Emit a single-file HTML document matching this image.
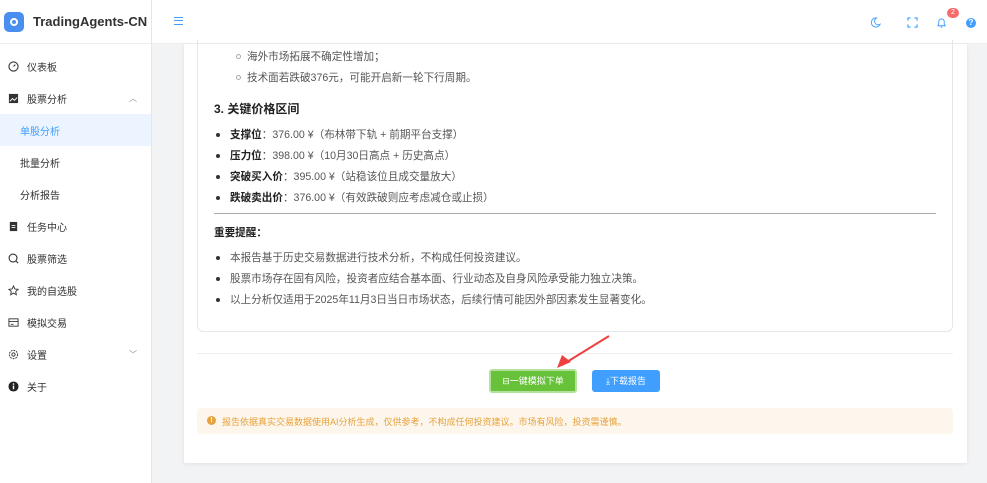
<!DOCTYPE html>
<html><head><meta charset="utf-8"><style>
*{box-sizing:border-box;margin:0;padding:0}
body{width:987px;height:483px;overflow:hidden;background:#f2f3f5;font-family:"Liberation Sans","Noto Sans CJK SC",sans-serif;color:#303133;position:relative}
.side{position:absolute;left:0;top:0;width:152px;height:483px;background:#fff;border-right:1px solid #e6e6e6}
.logo{height:44px;display:flex;align-items:center;padding-left:4px;border-bottom:1px solid #eee;white-space:nowrap}
.lg{width:20px;height:20px;border-radius:5px;background:#4a8ff0;display:flex;align-items:center;justify-content:center;flex:none}
.lg i{width:8px;height:8px;border-radius:50%;border:2px solid #fff;display:block}
.logo b{font-size:13px;margin-left:9px;color:#303133;font-weight:bold;white-space:nowrap}
.mi{height:32px;display:flex;align-items:center;font-size:10px;color:#303133;padding-left:8px;position:relative}
.mi .ic{width:11px;height:11px;margin-right:8px;display:inline-block}
.sub{padding-left:20px}
.act{background:#ecf5ff;color:#409eff}
.arr{position:absolute;right:14px;font-size:8px;color:#888}
.hdr{position:absolute;left:152px;top:0;right:0;height:44px;background:#fff;border-bottom:1px solid #eee}
.card{position:absolute;left:184px;top:44px;width:783px;height:419px;background:#fff;box-shadow:0 1px 4px rgba(0,0,0,.08)}
.inner{position:absolute;left:13px;top:-4px;width:756px;height:292px;border:1px solid #e4e7ed;border-top:none;border-radius:0 0 6px 6px}
.t{position:absolute;font-size:10.6px;color:#555;white-space:nowrap}
.t b{color:#222}
.dot{position:absolute;width:4px;height:4px;border-radius:50%;background:#333}
.cir{position:absolute;width:5px;height:5px;border-radius:50%;border:1px solid #aaa}
</style></head><body>
<div class="side">
<div class="logo"><div class="lg"><i></i></div><b>TradingAgents-CN</b></div>
<div style="height:6px"></div>
<div class="mi"><svg class="ic" viewBox="0 0 12 12"><circle cx="6" cy="6" r="5" fill="none" stroke="#333" stroke-width="1.2"/><path d="M6 6l2-2" stroke="#333" stroke-width="1.2"/></svg>仪表板</div>
<div class="mi"><svg class="ic" viewBox="0 0 12 12"><rect x="1" y="1" width="10" height="10" fill="#333"/><path d="M2 9l3-3 2 2 3-3" stroke="#fff" fill="none"/></svg>股票分析<span class="arr">︿</span></div>
<div class="mi sub act">单股分析</div>
<div class="mi sub">批量分析</div>
<div class="mi sub">分析报告</div>
<div class="mi"><svg class="ic" viewBox="0 0 12 12"><rect x="2" y="1" width="8" height="10" fill="#333"/><path d="M4 5h4M4 7h4" stroke="#fff"/></svg>任务中心</div>
<div class="mi"><svg class="ic" viewBox="0 0 12 12"><circle cx="5.5" cy="5.5" r="4.3" fill="none" stroke="#333" stroke-width="1.2"/><path d="M8.5 8.5l2.5 2.5" stroke="#333" stroke-width="1.2"/></svg>股票筛选</div>
<div class="mi"><svg class="ic" viewBox="0 0 12 12"><path d="M6 1l1.5 3.3 3.5.4-2.6 2.4.7 3.5L6 8.8 2.9 10.6l.7-3.5L1 4.7l3.5-.4z" fill="none" stroke="#333"/></svg>我的自选股</div>
<div class="mi"><svg class="ic" viewBox="0 0 12 12"><rect x="1" y="2" width="10" height="8" fill="none" stroke="#333"/><path d="M1 5h10M3 8h3" stroke="#333"/></svg>模拟交易</div>
<div class="mi"><svg class="ic" viewBox="0 0 12 12"><circle cx="6" cy="6" r="4.5" fill="none" stroke="#333" stroke-dasharray="2 1"/><circle cx="6" cy="6" r="1.8" fill="none" stroke="#333"/></svg>设置<span class="arr">﹀</span></div>
<div class="mi"><svg class="ic" viewBox="0 0 12 12"><circle cx="6" cy="6" r="5.5" fill="#222"/><path d="M6 5v4" stroke="#fff" stroke-width="1.5"/><circle cx="6" cy="3.3" r=".9" fill="#fff"/></svg>关于</div>
</div>
<div class="hdr">
<div style="position:absolute;left:22px;top:17px;width:9px;height:8px;border-top:1.5px solid #409eff;border-bottom:1.5px solid #409eff"><div style="margin-top:2px;border-top:1.5px solid #409eff"></div></div>
<svg style="position:absolute;left:718px;top:17px" width="11" height="11" viewBox="0 0 12 12"><path d="M7 1a5 5 0 1 0 4 7A4 4 0 0 1 7 1z" fill="none" stroke="#409eff"/></svg>
<svg style="position:absolute;left:755px;top:17px" width="11" height="11" viewBox="0 0 12 12"><path d="M1 4V1h3M8 1h3v3M11 8v3H8M4 11H1V8" fill="none" stroke="#409eff" stroke-width="1.2"/></svg>
<svg style="position:absolute;left:784px;top:17px" width="11" height="12" viewBox="0 0 12 12"><path d="M2 9h8L9 7V4.5a3 3 0 0 0-6 0V7zM5 10.5h2" fill="none" stroke="#409eff"/></svg>
<div style="position:absolute;left:795px;top:8px;width:12px;height:10px;border-radius:5px;background:#f56c6c;color:#fff;font-size:7px;text-align:center;line-height:10px">2</div>
<div style="position:absolute;left:814px;top:18px;width:10px;height:10px;border-radius:50%;background:#409eff;color:#fff;font-size:8px;text-align:center;line-height:10px;font-weight:bold">?</div>
</div>
<div class="card">
<div class="inner"></div>
<div class="cir" style="left:52px;top:10px"></div><div class="t" style="left:63px;top:5px">海外市场拓展不确定性增加；</div>
<div class="cir" style="left:52px;top:31px"></div><div class="t" style="left:63px;top:26px">技术面若跌破376元，可能开启新一轮下行周期。</div>
<div class="t" style="left:30px;top:56px;font-size:12px;font-weight:bold;color:#222">3. 关键价格区间</div>
<div class="dot" style="left:32px;top:89px"></div><div class="t" style="left:46px;top:83px"><b>支撑位</b>：376.00 ¥（布林带下轨 + 前期平台支撑）</div>
<div class="dot" style="left:32px;top:110px"></div><div class="t" style="left:46px;top:104px"><b>压力位</b>：398.00 ¥（10月30日高点 + 历史高点）</div>
<div class="dot" style="left:32px;top:131px"></div><div class="t" style="left:46px;top:125px"><b>突破买入价</b>：395.00 ¥（站稳该位且成交量放大）</div>
<div class="dot" style="left:32px;top:152px"></div><div class="t" style="left:46px;top:146px"><b>跌破卖出价</b>：376.00 ¥（有效跌破则应考虑减仓或止损）</div>
<div style="position:absolute;left:30px;top:169px;width:722px;border-top:1px solid #aaa"></div>
<div class="t" style="left:30px;top:181px;font-weight:bold;color:#222">重要提醒：</div>
<div class="dot" style="left:32px;top:212px"></div><div class="t" style="left:46px;top:206px">本报告基于历史交易数据进行技术分析，不构成任何投资建议。</div>
<div class="dot" style="left:32px;top:233px"></div><div class="t" style="left:46px;top:227px">股票市场存在固有风险，投资者应结合基本面、行业动态及自身风险承受能力独立决策。</div>
<div class="dot" style="left:32px;top:254px"></div><div class="t" style="left:46px;top:248px">以上分析仅适用于2025年11月3日当日市场状态，后续行情可能因外部因素发生显著变化。</div>
<div style="position:absolute;left:13px;top:309px;width:756px;border-top:1px solid #eee"></div>
<div style="position:absolute;left:305px;top:325px;width:88px;height:24px;background:#67c23a;border:2px solid #b3e19d;border-radius:3px;color:#fff;font-size:9px;text-align:center;line-height:20px">⊟一键模拟下单</div>
<div style="position:absolute;left:408px;top:326px;width:68px;height:22px;background:#409eff;border-radius:3px;color:#fff;font-size:9px;text-align:center;line-height:22px">⤓下载报告</div>
<svg style="position:absolute;left:370px;top:290px" width="60" height="36"><path d="M55 2L8 31" stroke="#f04040" stroke-width="2"/><path d="M3 34l5-13 9 7z" fill="#f04040"/></svg>
<div style="position:absolute;left:13px;top:364px;width:756px;height:26px;background:#fdf6ec;border-radius:4px"></div>
<div style="position:absolute;left:23px;top:372px;width:9px;height:9px;border-radius:50%;background:#e6a23c;color:#fff;font-size:7px;text-align:center;line-height:9px;font-weight:bold">!</div>
<div class="t" style="left:38px;top:371px;font-size:9px;color:#e6a23c">报告依据真实交易数据使用AI分析生成，仅供参考，不构成任何投资建议。市场有风险，投资需谨慎。</div>
</div>
</body></html>
